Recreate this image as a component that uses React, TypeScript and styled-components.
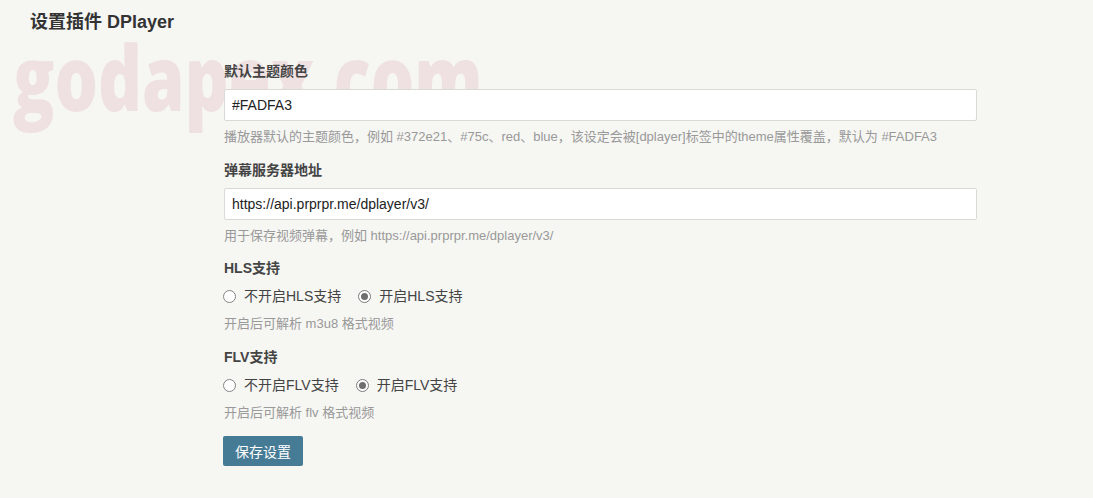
import React from "react";
import styled, { createGlobalStyle } from "styled-components";

const GlobalStyle = createGlobalStyle`
  html, body { margin: 0; padding: 0; background: #f6f6f3; }
  body {
    font-family: "Liberation Sans", Arial, "Noto Sans CJK SC", sans-serif;
    font-size: 14px;
    line-height: 1.5;
    color: #444;
  }
  * { box-sizing: border-box; }
`;

const Page = styled.div`
  position: relative;
  width: 1093px;
  min-height: 498px;
  overflow: hidden;
`;

const Watermark = styled.div`
  position: absolute;
  left: 13px;
  top: 31px;
  font-family: "Open Sans", "Noto Sans", sans-serif;
  font-weight: 800;
  font-size: 90px;
  line-height: 1;
  letter-spacing: 0;
  color: #efe1e1;
  white-space: nowrap;
  transform: scaleX(0.76);
  transform-origin: left top;
  z-index: 0;
  pointer-events: none;
  user-select: none;
`;

const Header = styled.header`
  position: relative;
  z-index: 1;
  padding: 9px 30px 0;
`;

const Title = styled.h2`
  margin: 0;
  font-size: 18px;
  line-height: 27px;
  font-weight: 700;
  color: #333;
`;

const Layout = styled.div`
  position: relative;
  z-index: 1;
  display: grid;
  grid-template-columns: 224px 753px 1fr;
  margin-top: 25px;
`;

const Form = styled.form`
  grid-column: 2;
  display: flex;
  flex-direction: column;
`;

const Option = styled.div`
  display: flex;
  flex-direction: column;
  margin-bottom: 13px;
`;

const Label = styled.label`
  display: block;
  font-weight: 700;
  font-size: 14px;
  line-height: 21px;
  margin-bottom: 7px;
  color: #444;
`;

const TextInput = styled.input`
  width: 100%;
  height: 32px;
  padding: 0 7px;
  border: 1px solid #d9d9d6;
  border-radius: 2px;
  background: #fff;
  font-family: "Liberation Sans", Arial, sans-serif;
  font-size: 14px;
  color: #222;
  outline: none;
`;

const Description = styled.p<{ $gap?: number }>`
  margin: ${(p) => p.$gap ?? 6}px 0 0;
  font-size: 13px;
  line-height: 19.5px;
  color: #999;
`;

const RadioList = styled.div`
  display: flex;
  align-items: center;
  gap: 17px;
  height: 19px;
  margin-top: 1px;
  margin-left: -1px;
`;

const RadioLabel = styled.label`
  display: inline-flex;
  align-items: center;
  gap: 8px;
  font-size: 14px;
  line-height: 19px;
  color: #444;
  cursor: pointer;
`;

const Radio = styled.input`
  appearance: none;
  margin: 0;
  width: 13px;
  height: 13px;
  border-radius: 50%;
  border: 1px solid #858585;
  background: #fff;
  display: inline-grid;
  place-content: center;
  &:checked::before {
    content: "";
    width: 7px;
    height: 7px;
    border-radius: 50%;
    background: #6e6e6e;
  }
  &:checked {
    border: 1.5px solid #7a7a7a;
  }
`;

const SubmitButton = styled.button`
  align-self: flex-start;
  margin-top: 1px;
  margin-left: -1px;
  height: 30px;
  width: 80px;
  border: none;
  border-radius: 2px;
  background: #467b96;
  color: #fff;
  font-family: "Liberation Sans", Arial, "Noto Sans CJK SC", sans-serif;
  font-size: 14px;
  cursor: pointer;
`;

type RadioOpt = { value: string; label: string };

const RadioGroup: React.FC<{ name: string; options: RadioOpt[]; value: string }> = ({ name, options, value }) => (
  <RadioList>
    {options.map((o) => (
      <RadioLabel key={o.value}>
        <Radio type="radio" name={name} value={o.value} defaultChecked={o.value === value} />
        {o.label}
      </RadioLabel>
    ))}
  </RadioList>
);

export default function App() {
  return (
    <Page>
      <GlobalStyle />
      <Watermark>godapex.com</Watermark>
      <Header>
        <Title>设置插件 DPlayer</Title>
      </Header>
      <Layout>
        <Form onSubmit={(e) => e.preventDefault()}>
          <Option>
            <Label>默认主题颜色</Label>
            <TextInput type="text" defaultValue="#FADFA3" />
            <Description>
              播放器默认的主题颜色，例如 #372e21、#75c、red、blue，该设定会被[dplayer]标签中的theme属性覆盖，默认为 #FADFA3
            </Description>
          </Option>
          <Option>
            <Label>弹幕服务器地址</Label>
            <TextInput type="text" defaultValue="https://api.prprpr.me/dplayer/v3/" />
            <Description>用于保存视频弹幕，例如 https://api.prprpr.me/dplayer/v3/</Description>
          </Option>
          <Option>
            <Label>HLS支持</Label>
            <RadioGroup
              name="hls"
              value="1"
              options={[
                { value: "0", label: "不开启HLS支持" },
                { value: "1", label: "开启HLS支持" },
              ]}
            />
            <Description $gap={8}>开启后可解析 m3u8 格式视频</Description>
          </Option>
          <Option>
            <Label>FLV支持</Label>
            <RadioGroup
              name="flv"
              value="1"
              options={[
                { value: "0", label: "不开启FLV支持" },
                { value: "1", label: "开启FLV支持" },
              ]}
            />
            <Description $gap={8}>开启后可解析 flv 格式视频</Description>
          </Option>
          <SubmitButton type="submit">保存设置</SubmitButton>
        </Form>
      </Layout>
    </Page>
  );
}
